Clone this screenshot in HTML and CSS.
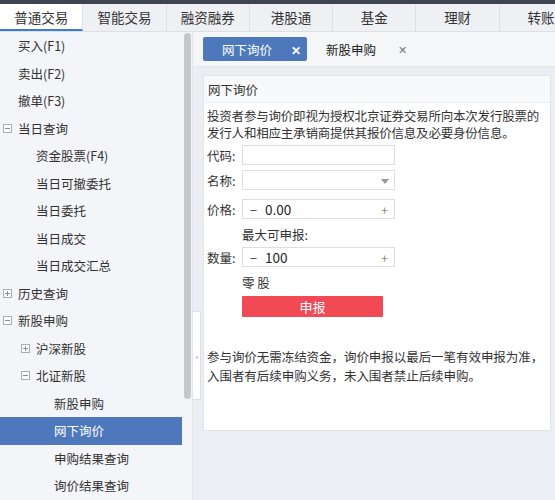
FILE: index.html
```html
<!DOCTYPE html>
<html lang="zh-CN">
<head>
<meta charset="utf-8">
<link rel="stylesheet" href="styles.css">
</head>
<body>
<div class="topbar"></div>
<div class="tabs">
  <div class="tab active">普通交易</div>
  <div class="tab">智能交易</div>
  <div class="tab">融资融券</div>
  <div class="tab">港股通</div>
  <div class="tab">基金</div>
  <div class="tab">理财</div>
  <div class="tab">转账</div>
</div>
<div class="main">
  <div class="sidebar">
    <ul class="tree">
      <li class="row l1">买入(F1)</li>
      <li class="row l1">卖出(F2)</li>
      <li class="row l1">撤单(F3)</li>
      <li class="row l1"><span class="box minus"></span>当日查询</li>
      <li class="row l2">资金股票(F4)</li>
      <li class="row l2">当日可撤委托</li>
      <li class="row l2">当日委托</li>
      <li class="row l2">当日成交</li>
      <li class="row l2">当日成交汇总</li>
      <li class="row l1"><span class="box plus"></span>历史查询</li>
      <li class="row l1"><span class="box minus"></span>新股申购</li>
      <li class="row l2"><span class="box plus"></span>沪深新股</li>
      <li class="row l2"><span class="box minus"></span>北证新股</li>
      <li class="row l3">新股申购</li>
      <li class="row l3 selected">网下询价</li>
      <li class="row l3">申购结果查询</li>
      <li class="row l3">询价结果查询</li>
    </ul>
    <div class="scroll"><div class="thumb"></div></div>
  </div>
  <div class="content">
    <div class="handle">&lsaquo;&lsaquo;</div>
    <div class="ctabs">
      <div class="ctab on">网下询价<span class="x">✕</span></div>
      <div class="ctab">新股申购<span class="x">✕</span></div>
    </div>
    <div class="panel">
      <div class="phead">网下询价</div>
      <div class="pbody">
        <p class="note">投资者参与询价即视为授权北京证券交易所向本次发行股票的发行人和相应主承销商提供其报价信息及必要身份信息。</p>
        <div class="form">
          <div class="frow r-code"><span class="lab">代码:</span><div class="field"></div></div>
          <div class="frow r-name"><span class="lab">名称:</span><div class="field sel"><span class="tri"></span></div></div>
          <div class="frow r-price"><span class="lab">价格:</span><div class="field num"><span class="mn">−</span><span class="val">0.00</span><span class="pl">+</span></div></div>
          <div class="frow r-max"><span class="lab"></span><span class="hint">最大可申报:</span></div>
          <div class="frow r-qty"><span class="lab">数量:</span><div class="field num"><span class="mn">−</span><span class="val">100</span><span class="pl">+</span></div></div>
          <div class="frow r-odd"><span class="lab"></span><span class="hint">零 股</span></div>
          <div class="frow r-btn"><span class="lab"></span><button class="submit">申报</button></div>
        </div>
        <p class="note foot">参与询价无需冻结资金，询价申报以最后一笔有效申报为准，入围者有后续申购义务，未入围者禁止后续申购。</p>
      </div>
    </div>
  </div>
</div>
</body>
</html>
```
FILE: styles.css
```css
* { box-sizing: border-box; }
html, body { margin: 0; padding: 0; }
body {
  width: 555px;
  height: 500px;
  overflow: hidden;
  font-family: "Noto Sans CJK SC", "Noto Sans", sans-serif;
  font-size: 12.5px;
  color: #333;
  background: #eceef3;
}
.topbar { height: 4px; background: #3e4450; }
.tabs {
  display: flex;
  height: 28px;
  overflow: hidden;
  background: #eff0f3;
  border-bottom: 1px solid #dde0e5;
}
.tab {
  flex: 0 0 83.3px;
  display: flex;
  align-items: center;
  justify-content: center;
  font-size: 13.5px;
  color: #333;
  border-right: 1px solid #dcdfe4;
  padding-bottom: 2px;
}
.tab.active {
  background: #fff;
  border-bottom: 2px solid #3c7ad5;
  padding-bottom: 0;
}
.main { display: flex; height: 468px; }
.sidebar {
  width: 192px;
  flex: none;
  display: flex;
  background: #f4f5f8;
}
.tree {
  list-style: none;
  margin: 0;
  padding: 0;
  width: 182px;
}
.row {
  height: 27.5px;
  display: flex;
  align-items: center;
  white-space: nowrap;
  color: #333;
  position: relative;
}
.l1 { padding-left: 18px; }
.l2 { padding-left: 36px; }
.l3 { padding-left: 54px; }
.row.selected { background: #4e78bc; color: #fff; }
.box {
  width: 9px;
  height: 9px;
  border: 1px solid #a9adb4;
  margin-left: -15px;
  margin-right: 6px;
  position: relative;
  background: #fff;
}
.box::before {
  content: "";
  position: absolute;
  left: 1px; right: 1px; top: 3px;
  height: 1px;
  background: #888c93;
}
.box.plus::after {
  content: "";
  position: absolute;
  top: 1px; bottom: 1px; left: 3px;
  width: 1px;
  background: #888c93;
}
.scroll { width: 10px; padding: 1px 1px 0 2px; }
.thumb {
  width: 7px;
  height: 366px;
  background: #c4c7cc;
  border-radius: 4px;
}
.content {
  flex: 1;
  position: relative;
  padding: 0 4px 0 10px;
  border-left: 1px solid #e3e5ea;
}
.handle {
  position: absolute;
  left: 0;
  top: 279px;
  width: 8px;
  height: 89px;
  background: #fff;
  border: 1px solid #dcdfe4;
  border-left: none;
  font-size: 7px;
  color: #999;
  display: flex;
  align-items: center;
  justify-content: center;
  letter-spacing: -1px;
  overflow: hidden;
}
.ctabs {
  display: flex;
  align-items: center;
  height: 35px;
  margin: 0 -4px 0 -10px;
  padding-left: 10px;
  background: #f5f6f8;
  border-bottom: 1px solid #e4e6ea;
}
.ctab {
  width: 104px;
  height: 24px;
  display: flex;
  align-items: center;
  padding-left: 19px;
  color: #222;
}
.ctab.on { background: #4e78bc; color: #fff; border-radius: 2px; }
.ctab .x { margin-left: 19px; font-size: 12px; font-weight: bold; }
.ctab:not(.on) .x { color: #777; font-weight: normal; font-size: 11px; margin-left: 22px; }
.panel {
  margin-top: 8px;
  background: #fff;
  border: 1px solid #e2e4e8;
  height: 356px;
}
.phead {
  height: 27px;
  display: flex;
  align-items: center;
  padding-left: 4px;
  background: #f8f9fa;
  border-bottom: 1px solid #eceef1;
}
.pbody { padding: 4px 0 0 3px; }
.note { margin: 0; line-height: 17px; letter-spacing: -0.2px; }
.form { margin-top: 4px; }
.frow { display: flex; align-items: center; height: 20px; }
.r-code { margin-bottom: 5px; }
.r-name { margin-bottom: 9px; }
.r-price { margin-bottom: 5px; }
.r-max { margin-bottom: 3px; }
.r-qty { margin-bottom: 5px; }
.r-odd { margin-bottom: 4px; }
.r-btn { height: 21px; }
.lab { width: 35px; flex: none; }
.field {
  width: 153px;
  height: 20px;
  border: 1px solid #dcdee2;
  background: #fff;
  display: flex;
  align-items: center;
  position: relative;
}
.tri {
  position: absolute;
  right: 5px;
  top: 8px;
  border-left: 4px solid transparent;
  border-right: 4px solid transparent;
  border-top: 5px solid #999;
}
.num .mn { margin-left: 7px; color: #444; }
.num .val { margin-left: 8px; font-size: 13.5px; color: #222; }
.num .pl { margin-left: auto; margin-right: 6px; color: #888; font-size: 12px; }
.hint { color: #333; }
.submit {
  width: 141px;
  height: 21px;
  border: none;
  border-radius: 1px;
  background: #f14a54;
  color: #fff;
  font-family: inherit;
  font-size: 13px;
  padding: 0;
}
.foot { margin-top: 30px; line-height: 19px; letter-spacing: -0.05px; }
```
